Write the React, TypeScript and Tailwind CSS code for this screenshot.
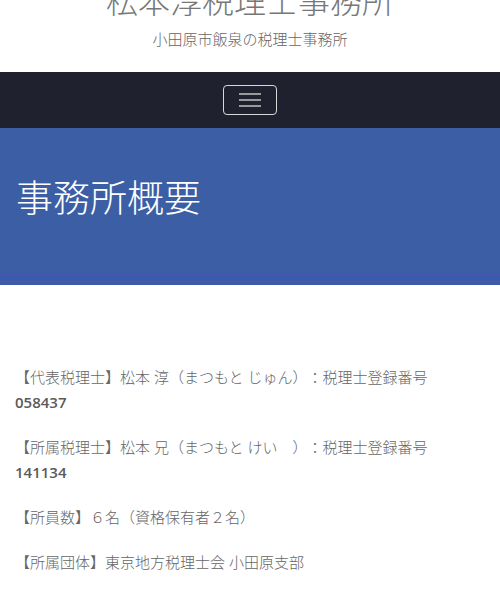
import React from 'react';

const font = { fontFamily: '"Open Sans", "Noto Sans CJK JP", sans-serif' };

const App = () => {
  return (
    <div className="w-[500px] h-[600px] overflow-hidden bg-white [text-spacing-trim:space-all]" style={font}>
      {/* Header */}
      <header className="text-center -mt-[20px] pb-[23px]">
        <h1 className="text-[32px] leading-[42px] font-light text-[#777]">松本淳税理士事務所</h1>
        <p className="text-[15px] leading-[20px] font-light text-[#666] mt-[7px]">小田原市飯泉の税理士事務所</p>
      </header>

      {/* Navbar */}
      <nav className="h-[56px] bg-[#20212f] flex items-center justify-center">
        <button className="w-[54px] h-[30px] border border-[#d8d8d8] rounded-[4px] flex flex-col items-center justify-center gap-[4px]">
          <span className="block w-[22px] h-[2px] bg-[#999]" />
          <span className="block w-[22px] h-[2px] bg-[#999]" />
          <span className="block w-[22px] h-[2px] bg-[#999]" />
        </button>
      </nav>

      {/* Page title */}
      <section className="h-[157px] bg-[#3c5ea4] flex flex-col">
        <div className="flex-1 px-[16px] pt-[45px]">
          <h2 className="text-[37px] leading-[50px] font-light text-white">事務所概要</h2>
        </div>
        <div className="h-[12px] bg-[#3d59a9] border-t-[3px] border-[#4156b2]" />
      </section>

      {/* Content */}
      <main className="pl-[15px] pr-[28px] pt-[80px] text-[15px] leading-[25px] font-light text-[#666] space-y-[20px]">
        <p>
          【代表税理士】松本 淳（まつもと じゅん）：税理士登録番号 <span className="font-semibold text-[#5a5a5a]">058437</span>
        </p>
        <p>
          【所属税理士】松本 兄（まつもと けい　）：税理士登録番号 <span className="font-semibold text-[#5a5a5a]">141134</span>
        </p>
        <p>【所員数】６名（資格保有者２名）</p>
        <p>【所属団体】東京地方税理士会 小田原支部</p>
      </main>
    </div>
  );
};

export default App;
